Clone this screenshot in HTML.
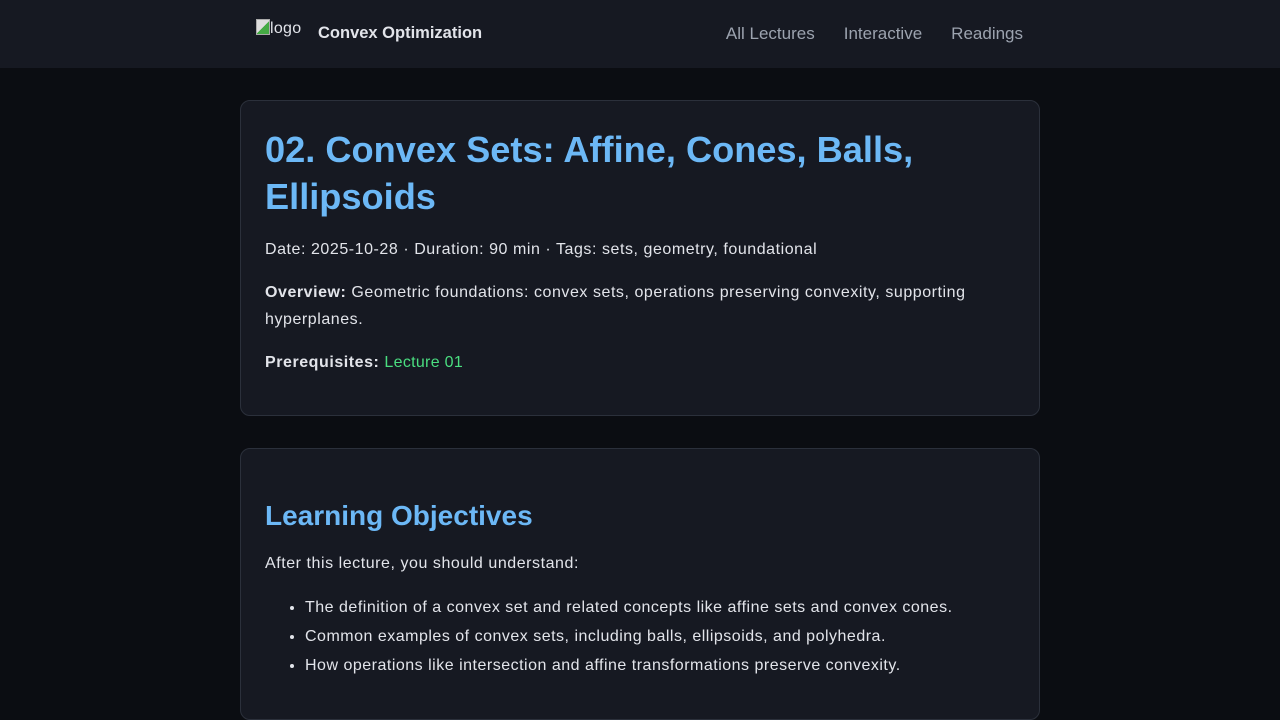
<!DOCTYPE html>
<html><head><meta charset="utf-8"><style>
*{box-sizing:border-box;margin:0;padding:0}
body{width:1280px;height:720px;overflow:hidden;background:#0b0d12;font-family:"Liberation Sans",sans-serif;color:#e2e4ea}
.nav{height:68px;background:#161922;position:relative}
.logo{position:absolute;left:256px;top:19px;font-size:16px;color:#e2e4ea;letter-spacing:0.3px}
.logo .ic{display:inline-block;width:14px;height:16px;border:1px solid #aaa;background:linear-gradient(135deg,#ddd 50%,#4a4 50%);vertical-align:-2px}
.brand{position:absolute;left:318px;top:24px;font-weight:bold;font-size:16.5px}
.links{position:absolute;right:257px;top:24px;font-size:17px;color:#9ca3af}
.links span{margin-left:29px}
.card{position:absolute;left:240px;width:800px;background:#161922;border:1px solid #2b303b;border-radius:10px;padding:0 24px}
h1{color:#6cb8f6;font-size:36.2px;line-height:47px;font-weight:bold;margin-top:25px}
p{font-size:16px;line-height:27px;letter-spacing:0.55px}
.g{color:#4ade80;letter-spacing:0.3px}
h2{color:#6cb8f6;font-size:28px;font-weight:bold;margin-top:51px}
ul{margin-left:40px;margin-top:16px}
li{font-size:16px;line-height:29px;letter-spacing:0.5px}
</style></head><body>
<div class="nav"><div class="logo"><span class="ic"></span>logo</div><div class="brand">Convex Optimization</div>
<div class="links"><span>All Lectures</span><span>Interactive</span><span>Readings</span></div></div>
<div class="card" style="top:100px;height:316px">
<h1>02. Convex Sets: Affine, Cones, Balls, Ellipsoids</h1>
<p style="margin-top:16px">Date: 2025-10-28 · Duration: 90 min · Tags: sets, geometry, foundational</p>
<p style="margin-top:16px;width:720px"><b>Overview:</b> Geometric foundations: convex sets, operations preserving convexity, supporting hyperplanes.</p>
<p style="margin-top:16px"><b>Prerequisites:</b> <span class="g">Lecture 01</span></p>
</div>
<div class="card" style="top:448px;height:272px">
<h2>Learning Objectives</h2>
<p style="margin-top:18px">After this lecture, you should understand:</p>
<ul><li>The definition of a convex set and related concepts like affine sets and convex cones.</li>
<li>Common examples of convex sets, including balls, ellipsoids, and polyhedra.</li>
<li>How operations like intersection and affine transformations preserve convexity.</li></ul>
</div>
</body></html>
